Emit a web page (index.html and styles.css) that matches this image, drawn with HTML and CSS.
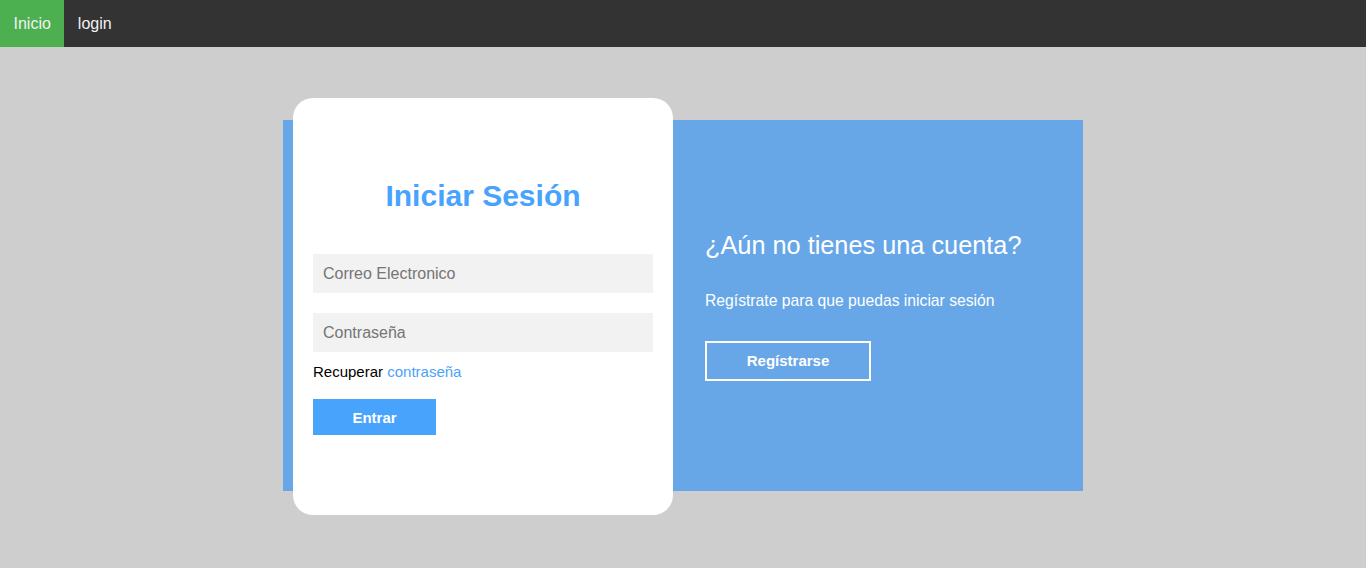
FILE: index.html
```html
<!DOCTYPE html>
<html lang="es">
<head>
<meta charset="utf-8">
<title>Login</title>
<link rel="stylesheet" href="styles.css">
</head>
<body>
<nav class="topnav">
  <a class="nav-link active" href="#">Inicio</a>
  <a class="nav-link" href="#">login</a>
</nav>
<main class="page">
  <div class="panel">
    <section class="card">
      <h1 class="card-title">Iniciar Sesión</h1>
      <input class="field" type="email" placeholder="Correo Electronico">
      <input class="field" type="password" placeholder="Contraseña">
      <p class="recover">Recuperar <a href="#">contraseña</a></p>
      <button class="btn-primary" type="button">Entrar</button>
    </section>
    <section class="side">
      <h2 class="side-title">¿Aún no tienes una cuenta?</h2>
      <p class="side-text">Regístrate para que puedas iniciar sesión</p>
      <button class="btn-outline" type="button">Regístrarse</button>
    </section>
  </div>
</main>
</body>
</html>
```
FILE: styles.css
```css
* { box-sizing: border-box; }
html, body {
  margin: 0;
  padding: 0;
  background: #cecece;
  font-family: "Liberation Sans", Arial, sans-serif;
}
.topnav {
  display: flex;
  height: 47px;
  background: #333333;
}
.nav-link {
  display: flex;
  align-items: center;
  padding: 0 13.5px;
  color: #f2f2f2;
  text-decoration: none;
  font-size: 16px;
}
.nav-link.active { background: #4caf50; }
.page {
  display: flex;
  justify-content: center;
  padding: 73px 0 77px;
}
.panel {
  display: flex;
  align-items: stretch;
  width: 800px;
  height: 371px;
  background: #67a7e8;
}
.card {
  display: flex;
  flex-direction: column;
  align-items: flex-start;
  flex: 0 0 380px;
  margin: -22px 0 -24px 10px;
  padding: 0 20px;
  background: #ffffff;
  border-radius: 20px;
}
.card-title {
  align-self: stretch;
  margin: 81px 0 41px;
  text-align: center;
  font-size: 30px;
  font-weight: bold;
  color: #48a3fd;
}
.field {
  width: 340px;
  height: 39px;
  margin: 0 0 20px;
  padding: 0 10px;
  border: none;
  background: #f2f2f2;
  font-family: inherit;
  font-size: 16px;
  color: #333;
  outline: none;
}
.field:last-of-type { margin-bottom: 11px; }
.field::placeholder { color: #757575; }
.recover {
  margin: 0 0 19px;
  font-size: 15px;
  color: #000;
}
.recover a { color: #48a3fd; text-decoration: none; }
.btn-primary {
  width: 123px;
  height: 36px;
  border: none;
  background: #48a3fd;
  color: #ffffff;
  font-family: inherit;
  font-size: 15px;
  font-weight: bold;
}
.side {
  display: flex;
  flex-direction: column;
  align-items: flex-start;
  justify-content: center;
  padding-left: 32px;
  color: #ffffff;
}
.side-title {
  margin: 0 0 32px;
  font-size: 25.3px;
  font-weight: normal;
}
.side-text {
  margin: 0 0 31px;
  font-size: 15.7px;
}
.btn-outline {
  width: 166px;
  height: 40px;
  border: 2px solid #ffffff;
  background: transparent;
  color: #ffffff;
  font-family: inherit;
  font-size: 15px;
  font-weight: bold;
}
```
